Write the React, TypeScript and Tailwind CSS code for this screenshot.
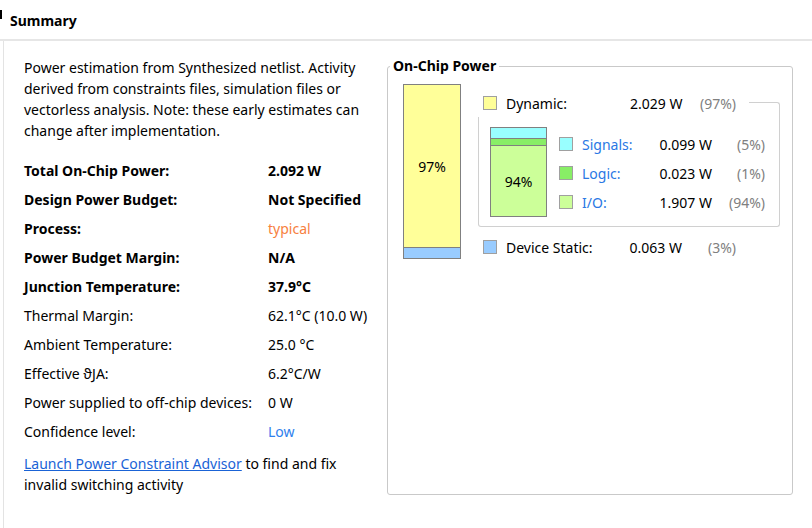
import type { ReactNode } from 'react';

interface Row {
  readonly label: string;
  readonly value: ReactNode;
  readonly bold?: boolean;
}

const ROWS: ReadonlyArray<Row> = [
  { label: 'Total On-Chip Power:', value: '2.092 W', bold: true },
  { label: 'Design Power Budget:', value: 'Not Specified', bold: true },
  { label: 'Process:', value: <span className="font-normal text-[#f7813e]">typical</span>, bold: true },
  { label: 'Power Budget Margin:', value: 'N/A', bold: true },
  { label: 'Junction Temperature:', value: '37.9°C', bold: true },
  { label: 'Thermal Margin:', value: '62.1°C (10.0 W)' },
  { label: 'Ambient Temperature:', value: '25.0 °C' },
  { label: 'Effective ϑJA:', value: '6.2°C/W' },
  { label: 'Power supplied to off-chip devices:', value: '0 W' },
  { label: 'Confidence level:', value: <span className="text-[#2f80ed]">Low</span> },
];

const SUB = [
  { label: 'Signals:', value: '0.099 W', pct: '(5%)', swatch: 'bg-[#99ffff]' },
  { label: 'Logic:', value: '0.023 W', pct: '(1%)', swatch: 'bg-[#88ee66]' },
  { label: 'I/O:', value: '1.907 W', pct: '(94%)', swatch: 'bg-[#ccff99]' },
];

function Swatch({ color }: { readonly color: string }) {
  return <span className={`block size-[14px] shrink-0 border border-[#a0a0a0] ${color}`} />;
}

function SummaryTable() {
  return (
    <div className="flex flex-col">
      {ROWS.map((r) => (
        <div key={r.label} className={`flex h-[29px] items-center whitespace-nowrap ${r.bold ? 'font-bold' : ''}`}>
          <span className="w-[244px] shrink-0">{r.label}</span>
          <span>{r.value}</span>
        </div>
      ))}
    </div>
  );
}

function OnChipPower() {
  return (
    <fieldset className="ml-[23px] mt-[15px] h-[439px] w-[406px] shrink-0 rounded-[3px] border border-[#c9c9c9] px-0 whitespace-nowrap">
      <legend className="ml-[2px] px-[3px] font-bold leading-[20px]">On-Chip Power</legend>
      <div className="flex pl-[15px] pt-[8px]">
        {/* total bar */}
        <div className="flex h-[175px] w-[58px] shrink-0 flex-col border border-[#808080]">
          <div className="flex flex-1 items-center justify-center bg-[#ffff99]">97%</div>
          <div className="h-[11px] border-t border-[#808080] bg-[#99ccff]" />
        </div>

        <div className="ml-[17px] flex w-[302px] flex-col pt-[12px]">
          {/* dynamic row, its line forms the top of the frame */}
          <div className="flex h-[21px] items-start">
            <div className="ml-[5px] flex h-[14px] items-center">
              <Swatch color="bg-[#ffff99]" />
              <span className="ml-[9px] w-[124px]">Dynamic:</span>
              <span className="w-[52px] text-right">2.029 W</span>
              <span className="w-[54px] text-right text-[#808080]">(97%)</span>
            </div>
            <div className="ml-auto mt-[6px] h-[15px] w-[31px] rounded-tr-[3px] border-t border-r border-[#d0d0d0]" />
          </div>
          <div className="flex h-[110px] rounded-b-[3px] border-x border-b border-[#d0d0d0] pl-[11px] pt-[10px]">
            <div className="flex h-[90px] w-[57px] shrink-0 flex-col border border-[#808080]">
              <div className="h-[10px] bg-[#99ffff]" />
              <div className="h-[8px] border-y border-[#808080] bg-[#88ee66]" />
              <div className="flex flex-1 items-center justify-center bg-[#ccff99]">94%</div>
            </div>
            <div className="ml-[12px] flex flex-col pt-[10px]">
              {SUB.map((s) => (
                <div key={s.label} className="flex h-[29px] items-start">
                  <div className="flex h-[14px] items-center">
                    <Swatch color={s.swatch} />
                    <span className="ml-[9px] w-[77px] text-[#2a78e4]">{s.label}</span>
                    <span className="w-[53px] text-right">{s.value}</span>
                    <span className="w-[53px] text-right text-[#808080]">{s.pct}</span>
                  </div>
                </div>
              ))}
            </div>
          </div>
          <div className="ml-[5px] mt-[13px] flex h-[14px] items-center">
            <Swatch color="bg-[#99ccff]" />
            <span className="ml-[9px] w-[123px]">Device Static:</span>
            <span className="w-[53px] text-right">0.063 W</span>
            <span className="w-[54px] text-right text-[#808080]">(3%)</span>
          </div>
        </div>
      </div>
    </fieldset>
  );
}

export default function App() {
  return (
    <div className="relative h-[528px] w-[812px] overflow-hidden bg-white font-['Noto_Sans',sans-serif] text-[14px] leading-[21px] text-black">
      <span className="absolute left-0 top-[10px] h-[9px] w-[2px] bg-black" />
      <header className="h-[41px] border-b-2 border-[#e6e6e6] pl-[10px] pt-[11px] font-bold leading-[20px]">Summary</header>
      <div className="ml-[3px] flex h-[487px] border-l border-[#e3e3e3]">
        <div className="w-[360px] shrink-0 pl-[20px] pt-[16px]">
          <p className="w-[340px]">
            Power estimation from Synthesized netlist. Activity derived from constraints files, simulation files or
            vectorless analysis. Note: these early estimates can change after implementation.
          </p>
          <div className="mt-[15px]">
            <SummaryTable />
          </div>
          <div className="mt-[7px] flex flex-col">
            <span className="whitespace-nowrap">
              <a href="#" className="text-[#1a63d6] underline">Launch Power Constraint Advisor</a>
              <span> to find and fix</span>
            </span>
            <span>invalid switching activity</span>
          </div>
        </div>
        <OnChipPower />
      </div>
    </div>
  );
}
